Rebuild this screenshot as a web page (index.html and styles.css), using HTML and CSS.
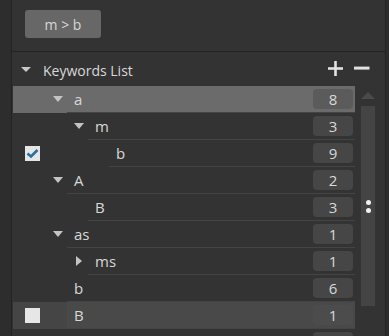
FILE: index.html
```html
<!DOCTYPE html>
<html lang="en">
<head>
    <meta charset="UTF-8">
    <meta name="viewport" content="width=device-width, initial-scale=1.0">
    <title>Keywords</title>
    <link rel="stylesheet" href="styles.css">
</head>
<body>
    <div class="panel">
        <div class="toolbar">
            <button class="path-button">m &gt; b</button>
        </div>

        <div class="section-head">
            <span class="head-arrow"></span>
            <span class="head-title">Keywords List</span>
            <div class="head-actions">
                <svg class="icon" width="16" height="15" viewBox="0 0 16 15">
                    <rect x="0" y="6.2" width="15" height="2.6" fill="#e2e2e2"/>
                    <rect x="6.2" y="0" width="2.6" height="15" fill="#e2e2e2"/>
                </svg>
                <svg class="icon" width="16" height="15" viewBox="0 0 16 15">
                    <rect x="0" y="5.6" width="15.5" height="3" fill="#e2e2e2"/>
                </svg>
            </div>
        </div>

        <div class="tree-wrap">
            <div class="tree">
                <div class="row hover">
                    <div class="check"></div>
                    <div class="arrow"><span class="tri-down"></span></div>
                    <div class="cell"><span class="name">a</span><span class="badge">8</span></div>
                </div>
                <div class="row">
                    <div class="check"></div>
                    <div class="indent d1"></div>
                    <div class="arrow"><span class="tri-down"></span></div>
                    <div class="cell"><span class="name">m</span><span class="badge">3</span></div>
                </div>
                <div class="row">
                    <div class="check">
                        <span class="box">
                            <svg width="15" height="15" viewBox="0 0 15 15">
                                <polyline points="2.5,7.5 6,10.5 12.5,4" fill="none" stroke="#2b6f9f" stroke-width="2.6"/>
                            </svg>
                        </span>
                    </div>
                    <div class="indent d2"></div>
                    <div class="arrow"></div>
                    <div class="cell"><span class="name">b</span><span class="badge">9</span></div>
                </div>
                <div class="row">
                    <div class="check"></div>
                    <div class="arrow"><span class="tri-down"></span></div>
                    <div class="cell"><span class="name">A</span><span class="badge">2</span></div>
                </div>
                <div class="row">
                    <div class="check"></div>
                    <div class="indent d1"></div>
                    <div class="arrow"></div>
                    <div class="cell"><span class="name">B</span><span class="badge">3</span></div>
                </div>
                <div class="row">
                    <div class="check"></div>
                    <div class="arrow"><span class="tri-down"></span></div>
                    <div class="cell"><span class="name">as</span><span class="badge">1</span></div>
                </div>
                <div class="row">
                    <div class="check"></div>
                    <div class="indent d1"></div>
                    <div class="arrow"><span class="tri-right"></span></div>
                    <div class="cell"><span class="name">ms</span><span class="badge">1</span></div>
                </div>
                <div class="row">
                    <div class="check"></div>
                    <div class="arrow"></div>
                    <div class="cell"><span class="name">b</span><span class="badge">6</span></div>
                </div>
                <div class="row selected">
                    <div class="check"><span class="box"></span></div>
                    <div class="arrow"></div>
                    <div class="cell"><span class="name">B</span><span class="badge">1</span></div>
                </div>
                <div class="row">
                    <div class="check"></div>
                    <div class="arrow"></div>
                    <div class="cell"><span class="name"></span><span class="badge"></span></div>
                </div>
            </div>

            <div class="scrollbar">
                <span class="scroll-up"></span>
                <div class="track">
                    <span class="dot"></span>
                    <span class="dot"></span>
                </div>
            </div>
        </div>
    </div>
</body>
</html>
```

FILE: styles.css
```css
html, body {
    margin: 0;
    padding: 0;
}
body {
    background-color: #2d2d2d;
    font-family: 'Open Sans', 'Noto Sans', sans-serif;
    color: #d8d8d8;
    width: 389px;
    height: 336px;
    overflow: hidden;
}
.panel {
    margin-left: 11px;
    width: 373px;
    height: 336px;
    background-color: #333333;
    border-left: 1px solid #232323;
    border-right: 1px solid #232323;
    overflow: hidden;
}
.toolbar {
    height: 52px;
    box-sizing: border-box;
    padding: 10px 0 0 13px;
    border-bottom: 1px solid #232323;
}
.path-button {
    width: 76px;
    height: 28px;
    border: none;
    border-radius: 3px;
    background-color: #676767;
    color: #d8d8d8;
    font-family: inherit;
    font-size: 14px;
    padding: 0;
}
.section-head {
    height: 34px;
    display: flex;
    align-items: center;
    padding: 0 15px 0 9px;
}
.head-arrow {
    width: 0;
    height: 0;
    border-left: 5px solid transparent;
    border-right: 5px solid transparent;
    border-top: 5px solid #c8c8c8;
    margin-right: 12px;
    margin-top: 1px;
}
.head-title {
    flex: 1;
    font-size: 14px;
    margin-top: 2px;
}
.head-actions {
    display: flex;
    gap: 10px;
    margin-top: -2px;
}
.tree-wrap {
    display: flex;
    padding-left: 1px;
}
.tree {
    width: 342px;
}
.row {
    display: flex;
    height: 27px;
}
.row.hover {
    background-color: #6b6b6b;
}
.row.selected {
    background-color: #454545;
}
.row.selected .cell {
    background-color: #494949;
}
.check {
    width: 33px;
    box-sizing: border-box;
    padding-left: 12px;
    display: flex;
    align-items: center;
}
.box {
    width: 15px;
    height: 15px;
    background-color: #e6e6e6;
    display: block;
}
.box svg {
    display: block;
}
.indent.d1 {
    width: 21px;
}
.indent.d2 {
    width: 42px;
}
.arrow {
    width: 21px;
    box-sizing: border-box;
    padding: 0 4px 1px 7px;
    display: flex;
    align-items: center;
    justify-content: center;
}
.tri-down {
    width: 0;
    height: 0;
    border-left: 5px solid transparent;
    border-right: 5px solid transparent;
    border-top: 6px solid #c4c4c4;
}
.tri-right {
    width: 0;
    height: 0;
    border-top: 5px solid transparent;
    border-bottom: 5px solid transparent;
    border-left: 6px solid #c4c4c4;
}
.cell {
    flex: 1;
    display: flex;
    align-items: center;
    padding: 0 2px 0 7px;
    border-bottom: 1px solid #444444;
}
.name {
    flex: 1;
    font-size: 15px;
}
.badge {
    width: 40px;
    height: 20px;
    line-height: 20px;
    border-radius: 4px;
    background-color: #464646;
    text-align: center;
    font-size: 15px;
    margin-top: -1px;
}
.row.hover .badge {
    background-color: #5b5b5b;
}
.row.selected .badge {
    background-color: #4c4c4c;
}
.scrollbar {
    margin-left: 6px;
    width: 14px;
    display: flex;
    flex-direction: column;
    align-items: center;
    padding-top: 6px;
}
.scroll-up {
    width: 0;
    height: 0;
    border-left: 7px solid transparent;
    border-right: 7px solid transparent;
    border-bottom: 7px solid #4a4a4a;
}
.track {
    margin-top: 7px;
    width: 14px;
    height: 200px;
    background-color: #444444;
    display: flex;
    flex-direction: column;
    align-items: center;
    padding-top: 94px;
    gap: 3px;
    box-sizing: border-box;
}
.dot {
    width: 5px;
    height: 5px;
    border-radius: 50%;
    background-color: #f2f2f2;
}
```
